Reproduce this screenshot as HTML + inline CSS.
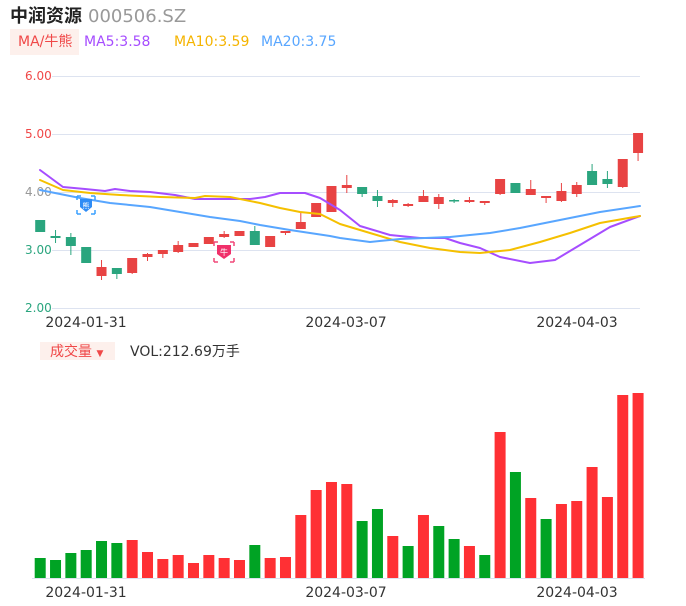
<!DOCTYPE html>
<html><head><meta charset="utf-8"><style>
body{margin:0;width:686px;height:606px;background:#fff;overflow:hidden;font-family:"Liberation Sans","Noto Sans CJK SC",sans-serif}
svg{position:absolute;left:0;top:0}
text{font-family:"DejaVu Sans","Noto Sans CJK SC",sans-serif}
polyline{stroke-linejoin:round;stroke-linecap:round}
</style></head><body>
<svg id="s" width="686" height="606" viewBox="0 0 686 606">
<text x="10" y="22" font-size="18" font-weight="bold" fill="#222" style="font-family:'Noto Sans CJK SC',sans-serif">中润资源</text>
<text x="88" y="22" font-size="18" fill="#999">000506.SZ</text>
<rect x="10" y="29" width="69" height="26" fill="#fdf0ec"/>
<text x="18" y="46" font-size="14" fill="#f04848">MA/牛熊</text>
<text x="84" y="46" font-size="14" fill="#a64dff">MA5:3.58</text>
<text x="174" y="46" font-size="14" fill="#f5b400">MA10:3.59</text>
<text x="261" y="46" font-size="14" fill="#58a6ff">MA20:3.75</text>
<g stroke="#dde3f0" stroke-width="1">
<line x1="52" y1="76.5" x2="640" y2="76.5"/><line x1="52" y1="134.5" x2="640" y2="134.5"/><line x1="52" y1="192.5" x2="640" y2="192.5"/><line x1="52" y1="250.5" x2="640" y2="250.5"/><line x1="52" y1="308.5" x2="640" y2="308.5"/>
<line x1="32" y1="578.5" x2="645" y2="578.5"/>
</g>
<g font-size="12">
<text x="25" y="80" fill="#f04848">6.00</text>
<text x="25" y="138" fill="#f04848">5.00</text>
<text x="25" y="196" fill="#999">4.00</text>
<text x="25" y="254" fill="#2aa57e">3.00</text>
<text x="25" y="312" fill="#2aa57e">2.00</text>
</g>
<g font-size="14" fill="#333" text-anchor="middle">
<text x="86" y="327">2024-01-31</text><text x="346" y="327">2024-03-07</text><text x="577" y="327">2024-04-03</text>
<text x="86" y="597">2024-01-31</text><text x="346" y="597">2024-03-07</text><text x="577" y="597">2024-04-03</text>
</g>
<rect x="40" y="342" width="75" height="18" fill="#fdf0ec"/>
<text x="50" y="356" font-size="14" fill="#f04848">成交量 <tspan font-size="9">▼</tspan></text>
<text x="130" y="356" font-size="14" fill="#333">VOL:212.69万手</text>
<g id="c"></g>
<polyline fill="none" stroke="#a64dff" stroke-width="2" points="40,170 63,187 85,189 105,191 115,189 130,191 150,192 175,195 195,199 220,199 250,199 265,197 280,193 305,193 320,198 340,210 360,226 390,235 420,238 445,238 460,243 480,248 500,257 530,263 555,260 580,245 610,227 640,216"/>
<polyline fill="none" stroke="#f5c000" stroke-width="2" points="40,180 63,190 90,193 120,195 160,197 195,198 205,196 230,197 260,203 280,208 300,212 320,214 340,224 370,233 400,242 430,248 460,252 480,253 510,250 540,242 570,233 600,223 640,216"/>
<polyline fill="none" stroke="#58a6ff" stroke-width="2" points="40,190 80,198 110,203 130,205 150,207 180,212 210,217 240,221 260,225 290,230 310,233 330,236 340,238 370,242 400,239 450,237 490,233 520,228 560,220 600,212 640,206"/>
<g>
<path d="M77,196h4M91,196h4M77,214h4M91,214h4M77,196v4M95,196v4M77,210v4M95,210v4" stroke="#3aa0ff" stroke-width="1.5"/>
<path d="M80,199h12v8l-6,5l-6,-5z" fill="#2f8cf5"/>
<text x="86" y="208" font-size="7" fill="#fff" text-anchor="middle">熊</text>
<path d="M214,242h4M230,242h4M214,262h4M230,262h4M214,242v4M234,242v4M214,258v4M234,258v4" stroke="#f04878" stroke-width="1.5"/>
<path d="M217,245h14v9l-7,5l-7,-5z" fill="#f0306a"/>
<text x="224" y="255" font-size="8" fill="#fff" text-anchor="middle">牛</text>
</g>
</svg>
<script>
var R="#e84343",G="#2aa57e";
var cd=[[220,232,220,232,G],[236,238,230,243,G],[237,246,233,255,G],[247,263,247,263,G],[267,276,260,280,R],[268,274,268,279,G],[258,273,258,274,R],[254,257,253,261,R],[250,254,250,258,R],[245,252,241,253,R],[243,247,243,247,R],[237,244,237,244,R],[234,237,231,238,R],[231,236,231,236,R],[231,245,226,245,G],[236,247,236,247,R],[231,233,231,235,R],[222,229,213,229,R],[203,217,203,217,R],[186,212,186,212,R],[185,188,175,193,R],[187,194,187,197,G],[196,201,190,207,G],[200,203,199,207,R],[204,206,203,207,R],[196,202,190,202,R],[197,204,194,209,R],[200,201,199,203,G],[200,202,197,203,R],[201,203,201,205,R],[179,194,179,195,R],[183,193,183,193,G],[189,195,180,195,R],[196,198,196,203,R],[191,201,183,202,R],[185,194,182,197,R],[171,185,164,185,G],[179,184,171,188,G],[159,187,159,188,R],[133,153,133,161,R]];
var vb=[[558,G],[560,G],[553,G],[550,G],[541,G],[543,G],[540,R],[552,R],[559,R],[555,R],[563,R],[555,R],[558,R],[560,R],[545,G],[558,R],[557,R],[515,R],[490,R],[482,R],[484,R],[521,G],[509,G],[536,R],[546,G],[515,R],[526,G],[539,G],[546,R],[555,G],[432,R],[472,G],[498,R],[519,G],[504,R],[501,R],[467,R],[497,R],[395,R],[393,R]];
var h="";
for(var i=0;i<40;i++){var x=40.2+15.33*i,c=cd[i];
h+='<line x1="'+x+'" y1="'+c[2]+'" x2="'+x+'" y2="'+c[3]+'" stroke="'+c[4]+'" stroke-width="1"/>';
h+='<rect x="'+(x-5)+'" y="'+c[0]+'" width="10" height="'+Math.max(1.5,c[1]-c[0])+'" fill="'+c[4]+'"/>';
var v=vb[i],vc=v[1]==G?"#00a324":"#ff3034";
h+='<rect x="'+(x-5.5)+'" y="'+v[0]+'" width="11" height="'+(578-v[0])+'" fill="'+vc+'"/>';}
document.getElementById("c").innerHTML=h;
</script>
</body></html>
